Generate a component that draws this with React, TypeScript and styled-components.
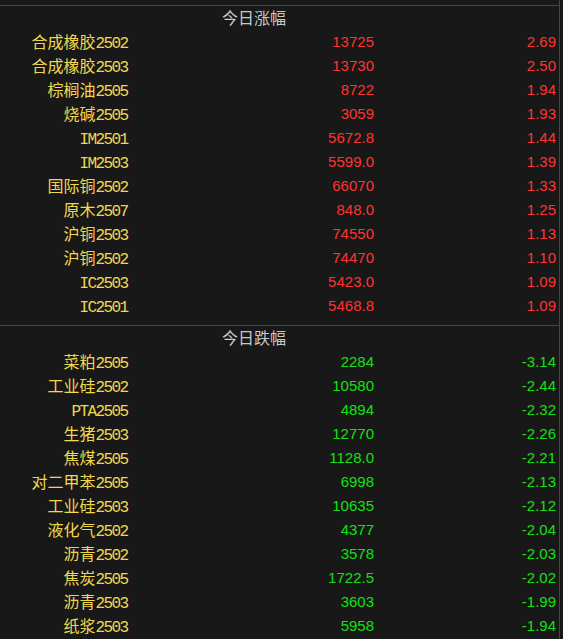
import React from "react";
import styled, { createGlobalStyle } from "styled-components";

const Global = createGlobalStyle`
  html, body { margin: 0; padding: 0; background: #181818; }
  body { font-family: "Liberation Sans", "Noto Sans CJK SC", sans-serif; }
`;

const Panel = styled.div`
  width: 559px;
  padding-top: 5px;
  border-right: 1px solid #454545;
  min-height: 634px;
  background: #181818;
`;

const Section = styled.section<{ $gap?: boolean }>`
  border-top: 1px solid #454545;
  padding-bottom: ${(p) => (p.$gap ? "7px" : "0")};
`;

const Header = styled.div`
  height: 24px;
  line-height: 22px;
  padding-left: 222px;
  color: #c9c9c9;
  font-family: "Noto Sans CJK SC", sans-serif;
  font-size: 16px;
`;

const Row = styled.div`
  display: grid;
  grid-template-columns: 129px 245px 182px;
  height: 24px;
  align-items: start;
`;

const Name = styled.div`
  text-align: right;
  height: 24px;
  line-height: 23px;
  font-family: "Noto Sans CJK SC", sans-serif;
  font-size: 16px;
  color: #f0d84e;
  white-space: nowrap;
`;

const Cjk = styled.span`
  font-family: "Noto Sans CJK SC", sans-serif;
  font-size: 16px;
`;

const Code = styled.span`
  font-family: "Liberation Mono", "DejaVu Sans Mono", monospace;
  font-size: 16px;
  letter-spacing: -1.6px;
  margin-right: 1.6px;
`;

const Num = styled.div<{ $up: boolean }>`
  text-align: right;
  color: ${(p) => (p.$up ? "#ff3333" : "#12e012")};
  font-family: "Liberation Sans", Arial, sans-serif;
  font-size: 15px;
  line-height: 23px;
`;

type Item = [string, string, string];

const up: Item[] = [
  ["合成橡胶2502", "13725", "2.69"],
  ["合成橡胶2503", "13730", "2.50"],
  ["棕榈油2505", "8722", "1.94"],
  ["烧碱2505", "3059", "1.93"],
  ["IM2501", "5672.8", "1.44"],
  ["IM2503", "5599.0", "1.39"],
  ["国际铜2502", "66070", "1.33"],
  ["原木2507", "848.0", "1.25"],
  ["沪铜2503", "74550", "1.13"],
  ["沪铜2502", "74470", "1.10"],
  ["IC2503", "5423.0", "1.09"],
  ["IC2501", "5468.8", "1.09"],
];

const down: Item[] = [
  ["菜粕2505", "2284", "-3.14"],
  ["工业硅2502", "10580", "-2.44"],
  ["PTA2505", "4894", "-2.32"],
  ["生猪2503", "12770", "-2.26"],
  ["焦煤2505", "1128.0", "-2.21"],
  ["对二甲苯2505", "6998", "-2.13"],
  ["工业硅2503", "10635", "-2.12"],
  ["液化气2502", "4377", "-2.04"],
  ["沥青2502", "3578", "-2.03"],
  ["焦炭2505", "1722.5", "-2.02"],
  ["沥青2503", "3603", "-1.99"],
  ["纸浆2503", "5958", "-1.94"],
];

function splitName(n: string): [string, string] {
  const i = n.search(/[A-Za-z0-9]/);
  if (i < 0) return [n, ""];
  return [n.slice(0, i), n.slice(i)];
}

const Rows: React.FC<{ items: Item[]; isUp: boolean }> = ({ items, isUp }) => (
  <>
    {items.map(([name, price, pct]) => {
      const [c, code] = splitName(name);
      return (
        <Row key={name}>
          <Name>
            {c && <Cjk>{c}</Cjk>}
            <Code>{code}</Code>
          </Name>
          <Num $up={isUp}>{price}</Num>
          <Num $up={isUp}>{pct}</Num>
        </Row>
      );
    })}
  </>
);

export default function App() {
  return (
    <>
      <Global />
      <Panel>
        <Section $gap>
          <Header>今日涨幅</Header>
          <Rows items={up} isUp />
        </Section>
        <Section>
          <Header>今日跌幅</Header>
          <Rows items={down} isUp={false} />
        </Section>
      </Panel>
    </>
  );
}
